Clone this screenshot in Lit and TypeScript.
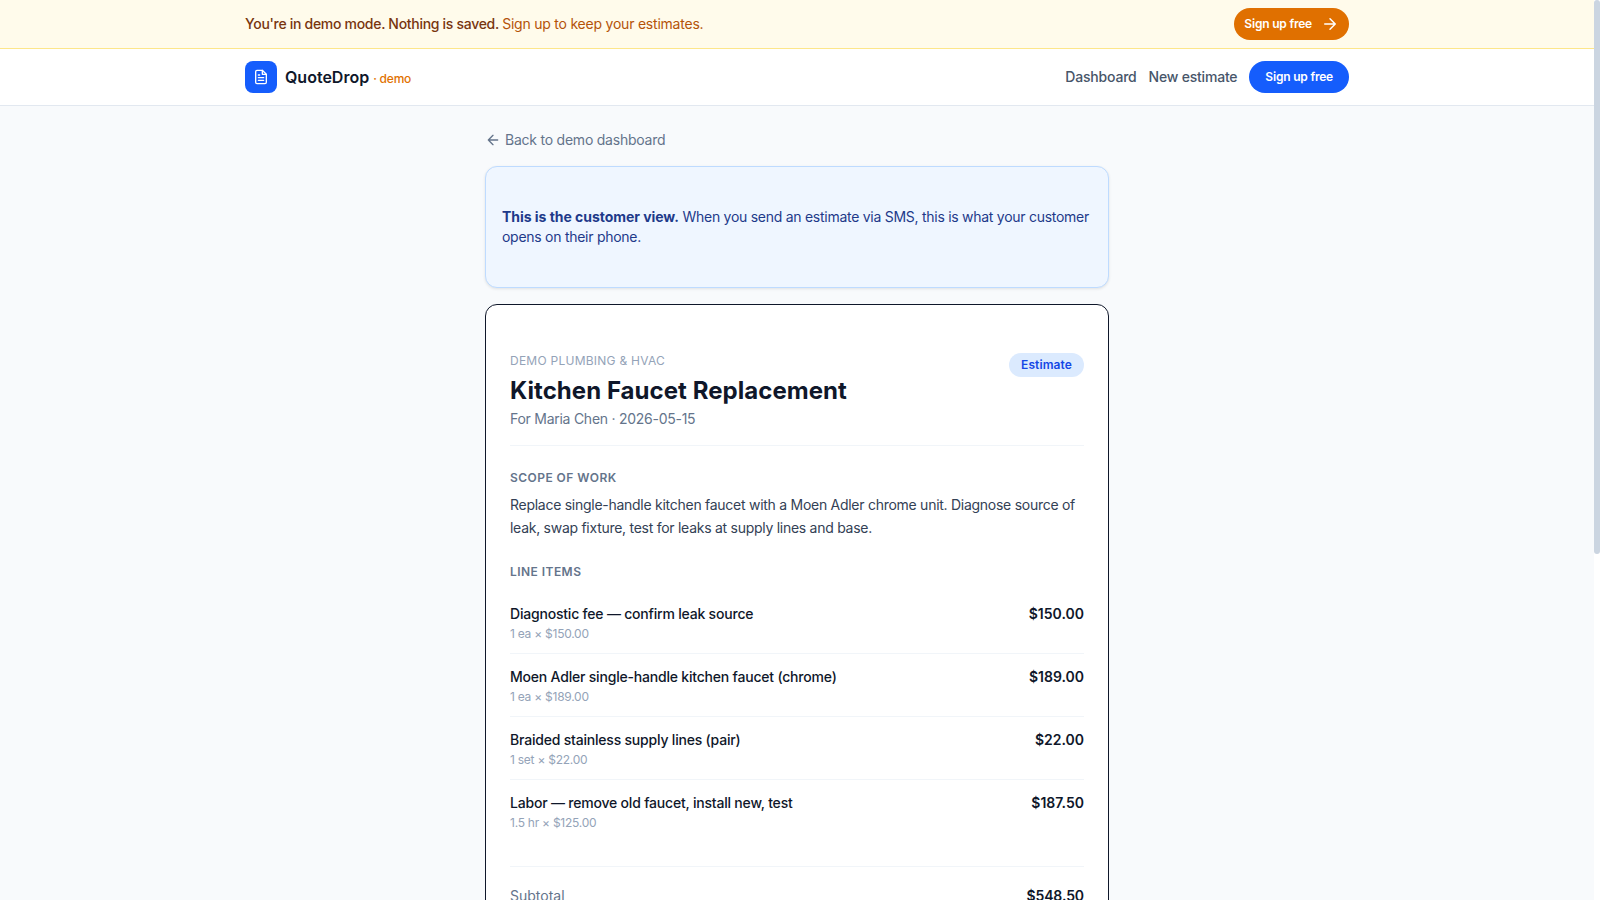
import { LitElement, html, css } from "lit";
import { customElement } from "lit/decorators.js";

const items = [
  { name: "Diagnostic fee — confirm leak source", meta: "1 ea × $150.00", price: "$150.00" },
  { name: "Moen Adler single-handle kitchen faucet (chrome)", meta: "1 ea × $189.00", price: "$189.00" },
  { name: "Braided stainless supply lines (pair)", meta: "1 set × $22.00", price: "$22.00" },
  { name: "Labor — remove old faucet, install new, test", meta: "1.5 hr × $125.00", price: "$187.50" },
];

@customElement("app-root")
export class AppRoot extends LitElement {
  static styles = css`
    :host {
      display: flex;
      height: 100vh;
      overflow: hidden;
      background: #f8fafc;
      color: #0f172a;
      font-family: Inter, "Noto Sans", sans-serif;
    }
    .page { flex: 1; min-width: 0; }
    /* scrollbars get hidden in the headless shot, so the bar is drawn */
    .track { width: 6px; flex: none; background: #fff; }
    .thumb { height: 554px; background: #cbd5e1; border-radius: 3px; }
    a { text-decoration: none; color: inherit; }
    .wrap {
      max-width: 1152px;
      margin: 0 auto;
      padding: 0 24px;
      box-sizing: border-box;
      display: flex;
      align-items: center;
      justify-content: space-between;
    }
    .banner {
      background: #fffbeb;
      border-bottom: 1px solid #fde68a;
      height: 49px;
      box-sizing: border-box;
      display: flex;
      align-items: center;
    }
    .banner .wrap { width: 100%; }
    .banner p { margin: 0; padding-bottom: 2px; font-size: 14px; font-weight: 500; color: #78350f; letter-spacing: -0.3px; }
    .banner p a { color: #b45309; font-weight: 400; letter-spacing: -0.22px; }
    .btn {
      display: inline-flex;
      align-items: center;
      box-sizing: border-box;
      border-radius: 999px;
      color: #fff;
      font-size: 12px;
      font-weight: 600;
      letter-spacing: -0.2px;
      height: 32px;
      padding-bottom: 2px;
    }
    .btn.amber { background: #e07000; padding-left: 10px; padding-right: 10px; gap: 9px; }
    .btn.amber svg { margin-top: 2px; }
    .btn.blue { background: #155dfc; padding-left: 16px; padding-right: 16px; }
    .nav { background: #fff; border-bottom: 1px solid #e2e8f0; height: 57px; box-sizing: border-box; display: flex; align-items: center; }
    .nav .wrap { width: 100%; }
    .brand { display: flex; align-items: center; gap: 8px; }
    .logo { width: 32px; height: 32px; border-radius: 8px; background: #155dfc; display: flex; align-items: center; justify-content: center; }
    .name { font-size: 16px; font-weight: 600; }
    .tag { font-size: 12px; font-weight: 500; color: #e17100; margin-left: 4px; letter-spacing: -0.2px; }
    .links { display: flex; align-items: center; gap: 12px; font-size: 14px; font-weight: 500; color: #475569; letter-spacing: -0.2px; }
    .link { padding-bottom: 2px; }
    main { max-width: 672px; margin: 0 auto; padding: 24px; box-sizing: border-box; }
    .back { display: flex; align-items: center; gap: 4px; font-size: 14px; color: #64748b; height: 20px; letter-spacing: -0.23px; }
    .back span { padding-bottom: 2px; }
    .note {
      margin-top: 16px;
      height: 122px;
      box-sizing: border-box;
      padding: 0 16px;
      display: flex;
      align-items: center;
      background: #eff6ff;
      border: 1px solid #bedbff;
      border-radius: 12px;
      box-shadow: 0 1px 3px rgba(0, 0, 0, 0.1);
      font-size: 14px;
      line-height: 20px;
      color: #1e3a8a;
      letter-spacing: -0.27px;
    }
    .note b { font-weight: 700; letter-spacing: -0.04px; }
    .card {
      margin-top: 16px;
      background: #fff;
      border: 1px solid #0f172a;
      border-radius: 12px;
      padding: 24px;
    }
    .head { display: flex; justify-content: space-between; align-items: flex-start; padding: 24px 0 16px; border-bottom: 1px solid #f1f5f9; }
    .biz { font-size: 12px; letter-spacing: 0.25px; color: #94a3b8; line-height: 16px; }
    h1 { margin: 6px 0 0; font-size: 24px; line-height: 32px; font-weight: 700; letter-spacing: 0.05px; }
    .for { margin-top: 2px; font-size: 14px; line-height: 20px; color: #64748b; letter-spacing: -0.26px; }
    .badge { background: #dbeafe; color: #1447e6; font-size: 12px; font-weight: 600; padding: 4px 12px; border-radius: 999px; line-height: 16px; letter-spacing: 0.1px; }
    h2 { margin: 24px 0 7px; font-size: 12px; line-height: 16px; font-weight: 600; letter-spacing: 0.45px; color: #64748b; }
    h2.items-title { margin: 25px 0 11px; }
    .scope { margin: 0; font-size: 14px; line-height: 23px; color: #334155; letter-spacing: -0.27px; }
    .item { display: flex; justify-content: space-between; padding: 13px 0 11px; border-bottom: 1px solid #f1f5f9; font-size: 14px; line-height: 20px; font-weight: 500; letter-spacing: -0.2px; }
    .item:last-child { border-bottom: 0; }
    .meta { margin-top: 2px; font-size: 12px; font-weight: 400; color: #94a3b8; line-height: 16px; letter-spacing: -0.25px; }
    .price { font-weight: 600; letter-spacing: 0; }
    .totals { margin-top: 24px; padding-top: 16px; border-top: 1px solid #f1f5f9; font-size: 14px; }
    .row { display: flex; justify-content: space-between; color: #64748b; padding: 4px 0; }
    .row span:last-child { color: #0f172a; font-weight: 600; letter-spacing: -0.1px; }
  `;

  render() {
    return html`
      <div class="page">
        <div class="banner">
          <div class="wrap">
            <p>You're in demo mode. Nothing is saved. <a href="#">Sign up to keep your estimates.</a></p>
            <a class="btn amber" href="#">Sign up free
              <svg width="18" height="18" viewBox="0 0 24 24" fill="none" stroke="#fff" stroke-width="2" stroke-linecap="round" stroke-linejoin="round"><path d="M5 12h14M12 5l7 7-7 7" /></svg>
            </a>
          </div>
        </div>
        <div class="nav">
          <div class="wrap">
            <div class="brand">
              <div class="logo">
                <svg width="16" height="16" viewBox="0 0 24 24" fill="none" stroke="#fff" stroke-width="2" stroke-linecap="round" stroke-linejoin="round"><path d="M14 2H6a2 2 0 0 0-2 2v16a2 2 0 0 0 2 2h12a2 2 0 0 0 2-2V8z" /><path d="M14 2v6h6M16 13H8M16 17H8M10 9H8" /></svg>
              </div>
              <div><span class="name">QuoteDrop</span><span class="tag">· demo</span></div>
            </div>
            <div class="links">
              <a class="link" href="#">Dashboard</a>
              <a class="link" href="#">New estimate</a>
              <a class="btn blue" href="#">Sign up free</a>
            </div>
          </div>
        </div>
        <main>
          <a class="back" href="#">
            <svg width="16" height="16" viewBox="0 0 24 24" fill="none" stroke="currentColor" stroke-width="2" stroke-linecap="round" stroke-linejoin="round"><path d="M19 12H5M12 19l-7-7 7-7" /></svg>
            <span>Back to demo dashboard</span>
          </a>
          <div class="note">
            <div><b>This is the customer view.</b> When you send an estimate via SMS, this is what your customer opens on their phone.</div>
          </div>
          <div class="card">
            <div class="head">
              <div>
                <div class="biz">DEMO PLUMBING &amp; HVAC</div>
                <h1>Kitchen Faucet Replacement</h1>
                <div class="for">For Maria Chen · 2026-05-15</div>
              </div>
              <span class="badge">Estimate</span>
            </div>
            <h2>SCOPE OF WORK</h2>
            <p class="scope">Replace single-handle kitchen faucet with a Moen Adler chrome unit. Diagnose source of leak, swap fixture, test for leaks at supply lines and base.</p>
            <h2 class="items-title">LINE ITEMS</h2>
            <div>
              ${items.map(
                (i) => html`<div class="item">
                  <div>${i.name}<div class="meta">${i.meta}</div></div>
                  <div class="price">${i.price}</div>
                </div>`
              )}
            </div>
            <div class="totals">
              <div class="row"><span>Subtotal</span><span>$548.50</span></div>
            </div>
          </div>
        </main>
      </div>
      <div class="track"><div class="thumb"></div></div>
    `;
  }
}
